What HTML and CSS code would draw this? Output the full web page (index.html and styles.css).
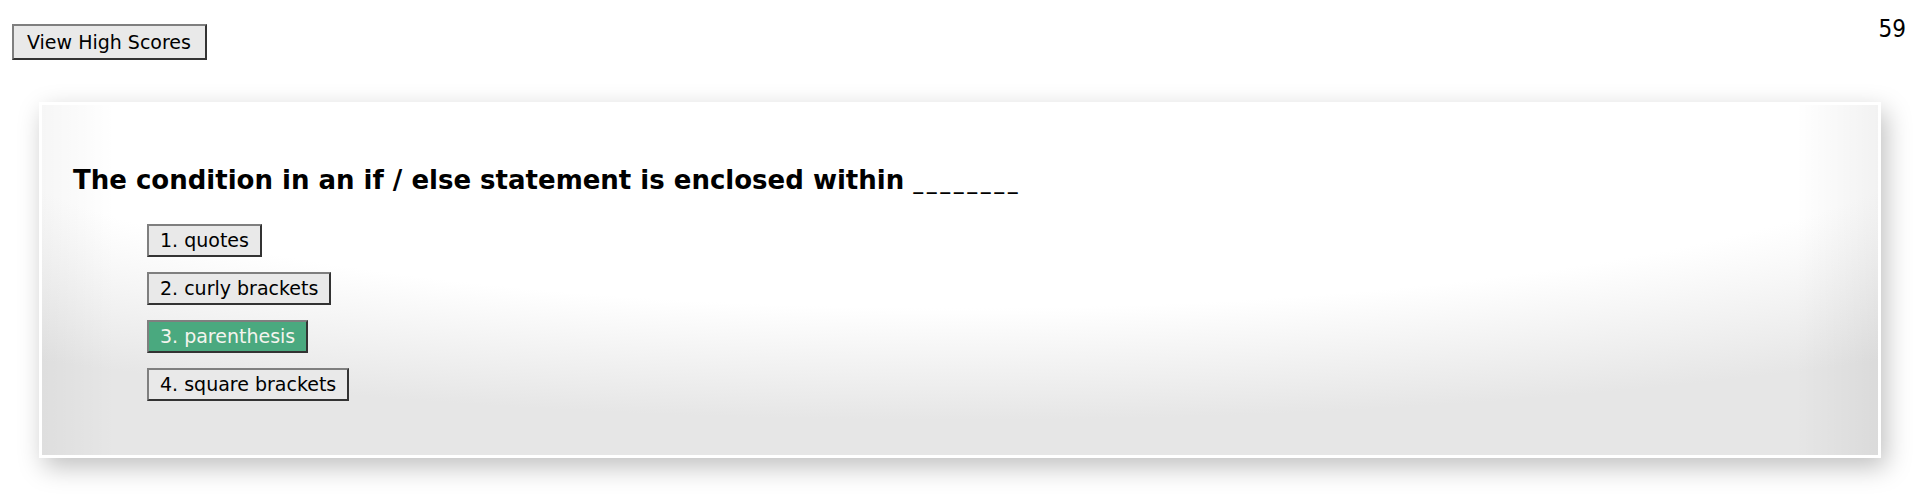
FILE: index.html
```html
<!DOCTYPE html>
<html>
<head>
<meta charset="utf-8">
<title>Quiz</title>
<link rel="stylesheet" href="styles.css">
</head>
<body>
<header class="top-bar">
  <button class="btn scores-btn">View High Scores</button>
  <span class="timer">59</span>
</header>
<main class="quiz-card">
  <h2 class="question">The condition in an if / else statement is enclosed within <span class="blank">________</span></h2>
  <div class="answers">
    <button class="btn answer">1. quotes</button>
    <button class="btn answer">2. curly brackets</button>
    <button class="btn answer correct">3. parenthesis</button>
    <button class="btn answer">4. square brackets</button>
  </div>
</main>
</body>
</html>
```

FILE: styles.css
```css
html, body {
  margin: 0;
  padding: 0;
  background: #ffffff;
  font-family: "DejaVu Sans", sans-serif;
  color: #000;
}

body {
  min-height: 504px;
  overflow: hidden;
}

.top-bar {
  display: flex;
  justify-content: space-between;
  align-items: flex-start;
  padding: 15px 9px 0 12px;
}

.btn {
  font-family: "DejaVu Sans", sans-serif;
  font-size: 19px;
  line-height: 22px;
  color: #000;
  background: #e9e9e9;
  border: 2px solid;
  border-color: #7f7f7f #333333 #333333 #7f7f7f;
  border-radius: 0;
  cursor: pointer;
}

.scores-btn {
  margin-top: 9px;
  padding: 5px 14px 5px 13px;
}

.timer {
  font-family: "DejaVu Sans Condensed", "DejaVu Sans", sans-serif;
  font-size: 24px;
  line-height: 28px;
}

.quiz-card {
  margin: 42px 34px 46px 39px;
  border: 3px solid #ffffff;
  background:
    linear-gradient(to right, rgba(0, 0, 0, 0.035), rgba(0, 0, 0, 0) 4%, rgba(0, 0, 0, 0) 95.5%, rgba(0, 0, 0, 0.05)),
    radial-gradient(ellipse 95% 100% at 50% 0, #ffffff 58%, #e6e6e6 90%);
  box-shadow: 5px 9px 24px rgba(0, 0, 0, 0.25);
  padding: 60px 31px 0 31px;
  box-sizing: border-box;
  height: 356px;
}

.question {
  margin: 0;
  font-size: 26px;
  line-height: 30px;
  font-weight: bold;
}

.blank {
  font-size: 20px;
  line-height: 10px;
  letter-spacing: 3.5px;
}

.answers {
  display: flex;
  flex-direction: column;
  align-items: flex-start;
  gap: 15px;
  margin-top: 29px;
  margin-left: 74px;
}

.answer {
  padding: 3px 11px;
  line-height: 23px;
}

.answer.correct {
  background: #4aa97f;
  color: #f4f4ee;
}
```
